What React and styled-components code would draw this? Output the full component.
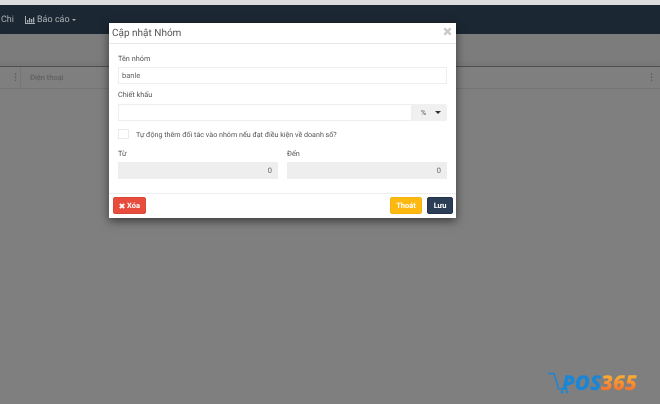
import React from 'react'
import styled, { createGlobalStyle } from 'styled-components'

const Global = createGlobalStyle`
  html, body { margin: 0; padding: 0; }
  body {
    background: #7f7f7f;
    font-family: Roboto, "Liberation Sans", sans-serif;
    text-rendering: geometricPrecision;
  }
`

// the reference is a soft, scaled-down capture
const Page = styled.div`
  position: relative;
  width: 660px;
  height: 404px;
  overflow: hidden;
  background: #7f7f7f;
  filter: blur(0.3px);
`

const TopStrip = styled.div`
  height: 5px;
  background: #dcdcdf;
`

const NavBar = styled.div`
  height: 29px;
  background: #1b2733;
  display: flex;
  align-items: center;
  padding: 0 0 0 1px;
  box-sizing: border-box;
  gap: 11px;
  color: #a9aeb2;
  font-size: 9px;
`

const NavItem = styled.span`
  display: inline-flex;
  align-items: center;
  gap: 2px;
`

const Toolbar = styled.div`
  height: 32px;
  background: #7c7c7c;
  border-bottom: 1px solid #4f4f4f;
  box-shadow: inset 0 -8px 6px -6px #757575;
`

const TableHead = styled.div`
  height: 21px;
  display: flex;
  align-items: center;
  border-bottom: 1px solid #747474;
  color: #5a5a5a;
  font-size: 7.5px;
  padding-right: 4px;
`

const Grip = styled.span`
  width: 21px;
  height: 100%;
  box-sizing: border-box;
  padding-left: 11px;
  display: flex;
  align-items: center;
  justify-content: center;
  border-right: 1px solid #767676;
  color: #5c5c5c;
  font-size: 9px;
  font-weight: 700;
`

const ColTitle = styled.span`
  flex: 1;
  padding-left: 9px;
`

const EndGrip = styled.span`
  color: #5c5c5c;
  font-size: 9px;
  font-weight: 700;
`

const Modal = styled.div`
  position: absolute;
  left: 109px;
  top: 23px;
  width: 347px;
  height: 195px;
  background: #fff;
  box-shadow: 0 3px 9px rgba(0, 0, 0, 0.55);
  display: flex;
  flex-direction: column;
`

const ModalHeader = styled.div`
  height: 20px;
  flex: none;
  display: flex;
  align-items: center;
  justify-content: space-between;
  padding: 0 3px;
  border-bottom: 1px solid #e9e9e9;
  color: #555;
  font-size: 10px;
`

const Close = styled.svg`
  width: 9px;
  height: 9px;
  margin-bottom: 4px;
  margin-right: 1px;
`

const ModalBody = styled.div`
  flex: 1;
  padding: 0 9px;
  display: flex;
  flex-direction: column;
`

const Label = styled.div`
  color: #555;
  font-size: 7.3px;
  line-height: 10px;
  margin-top: ${p => p.$top}px;
  margin-bottom: ${p => p.$gap}px;
`

const Input = styled.div`
  height: 17px;
  box-sizing: border-box;
  border: 1px solid #eeeeee;
  display: flex;
  align-items: center;
  justify-content: ${p => (p.$right ? 'flex-end' : 'flex-start')};
  padding: 0 5px 0 3px;
  color: #666;
  font-size: 7.5px;
  background: ${p => (p.$disabled ? '#eeeeee' : '#fff')};
  flex: ${p => (p.$grow ? 1 : 'none')};
`

const InputGroup = styled.div`
  display: flex;
  height: 17px;
`

const Addon = styled.div`
  width: 35px;
  background: #f0f0f0;
  border-radius: 0 2px 2px 0;
  display: flex;
  align-items: center;
  justify-content: space-between;
  padding: 0 6px 0 9px;
  box-sizing: border-box;
  color: #555;
  font-size: 7px;
`

const Caret = styled.span`
  width: 0;
  height: 0;
  border-left: ${p => p.$size || 3.5}px solid transparent;
  border-right: ${p => p.$size || 3.5}px solid transparent;
  border-top: ${p => p.$size || 3.5}px solid ${p => p.$color || '#333'};
`

const CheckRow = styled.div`
  display: flex;
  align-items: center;
  gap: 7px;
  margin-top: 7px;
  height: 12px;
  color: #555;
  font-size: 7.15px;
`

const CheckBox = styled.span`
  width: 11px;
  height: 10px;
  box-sizing: border-box;
  border: 1px solid #eaeaea;
`

const Columns = styled.div`
  display: grid;
  grid-template-columns: 160px 160px;
  column-gap: 9px;
`

const ModalFooter = styled.div`
  height: 25px;
  flex: none;
  box-sizing: border-box;
  border-top: 1px solid #eeeeee;
  padding: 3px 3px 0 4px;
  display: flex;
  justify-content: space-between;
`

const Actions = styled.div`
  display: flex;
  gap: 5px;
`

const Button = styled.div`
  width: ${p => p.$w}px;
  height: 17px;
  box-sizing: border-box;
  background: ${p => p.$bg};
  border: 1px solid ${p => p.$line};
  border-radius: 2px;
  color: #fff;
  display: flex;
  align-items: center;
  justify-content: center;
  gap: 2px;
  font-size: 7.5px;
  font-weight: 700;
`

const Logo = styled.div`
  position: absolute;
  left: 548px;
  top: 371px;
  display: flex;
  align-items: center;
`

const LogoWord = styled.span`
  font-family: "Open Sans", "Liberation Sans", sans-serif;
  font-style: italic;
  font-weight: 800;
  font-size: 20.5px;
  line-height: 24px;
  color: #1c86d6;
  margin-left: -10px;
`

const LogoNum = styled.span`
  background: linear-gradient(180deg, #f9b233 20%, #f4682c 85%);
  -webkit-background-clip: text;
  background-clip: text;
  color: transparent;
`

const CrossIcon = ({ color }) => (
  <svg width="6" height="6" viewBox="0 0 10 10">
    <path d="M1.5 1.5L8.5 8.5M8.5 1.5L1.5 8.5" stroke={color} strokeWidth="3.4" />
  </svg>
)

const ChartIcon = () => (
  <svg width="10" height="8" viewBox="0 0 10 8" fill="#a9aeb2">
    <path d="M0 0h1v7h9v1H0z" />
    <path d="M2 4h1.3v2.5H2zM4 2h1.3v4.5H4zM6 3h1.3v3.5H6zM8 1.5h1.3v5H8z" />
  </svg>
)

const CartIcon = () => (
  <svg width="24" height="24" viewBox="0 0 24 24" fill="none">
    <path d="M0 2.5h6l4.5 15.5h9" stroke="#1c86d6" strokeWidth="1.5" />
    <circle cx="14" cy="21" r="1.4" fill="#1c86d6" />
    <circle cx="19" cy="21" r="1.4" fill="#1c86d6" />
  </svg>
)

export default function App() {
  return (
    <Page>
      <Global />
      <TopStrip />
      <NavBar>
        <NavItem>Chi</NavItem>
        <NavItem>
          <ChartIcon /> Báo cáo <Caret $size={2.5} $color="#a9aeb2" />
        </NavItem>
      </NavBar>
      <Toolbar />
      <TableHead>
        <Grip>⋮</Grip>
        <ColTitle>Điện thoại</ColTitle>
        <EndGrip>⋮</EndGrip>
      </TableHead>

      <Modal>
        <ModalHeader>
          <span>Cập nhật Nhóm</span>
          <Close viewBox="0 0 10 10">
            <path d="M1.5 1.5L8.5 8.5M8.5 1.5L1.5 8.5" stroke="#c9c9c9" strokeWidth="2.6" />
          </Close>
        </ModalHeader>
        <ModalBody>
          <Label $top={10} $gap={3}>Tên nhóm</Label>
          <Input>banle</Input>
          <Label $top={6} $gap={4}>Chiết khấu</Label>
          <InputGroup>
            <Input $grow />
            <Addon>
              %
              <Caret />
            </Addon>
          </InputGroup>
          <CheckRow>
            <CheckBox />
            Tự động thêm đối tác vào nhóm nếu đạt điều kiện về doanh số?
          </CheckRow>
          <Columns>
            <div>
              <Label $top={9} $gap={3}>Từ</Label>
              <Input $disabled $right>0</Input>
            </div>
            <div>
              <Label $top={9} $gap={3}>Đến</Label>
              <Input $disabled $right>0</Input>
            </div>
          </Columns>
        </ModalBody>
        <ModalFooter>
          <Button $w={33} $bg="#e74c3c" $line="#d9493a">
            <CrossIcon color="#fff" />
            Xóa
          </Button>
          <Actions>
            <Button $w={32} $bg="#fdb90f" $line="#f5b30d">Thoát</Button>
            <Button $w={26} $bg="#2c3e55" $line="#23344a">Lưu</Button>
          </Actions>
        </ModalFooter>
      </Modal>

      <Logo>
        <CartIcon />
        <LogoWord>
          POS<LogoNum>365</LogoNum>
        </LogoWord>
      </Logo>
    </Page>
  )
}
